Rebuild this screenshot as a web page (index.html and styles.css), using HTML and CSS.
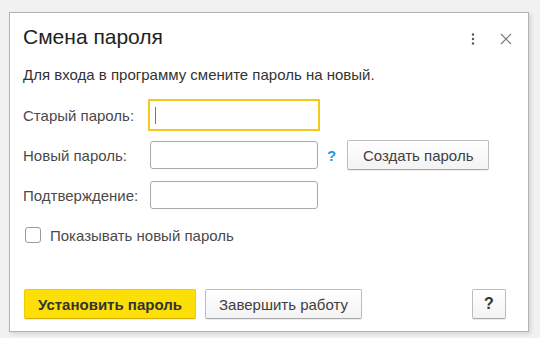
FILE: index.html
```html
<!DOCTYPE html>
<html lang="ru">
<head>
<meta charset="utf-8">
<link rel="stylesheet" href="styles.css">
</head>
<body>
<div class="dialog">
  <div class="header">
    <div class="title">Смена пароля</div>
    <div class="tools">
      <svg class="more" width="4" height="12" viewBox="0 0 4 12"><circle cx="2" cy="1.5" r="1.2" fill="#555"/><circle cx="2" cy="6" r="1.2" fill="#555"/><circle cx="2" cy="10.5" r="1.2" fill="#555"/></svg>
      <svg class="close" width="12" height="12" viewBox="0 0 12 12"><path d="M1 1 L11 11 M11 1 L1 11" stroke="#777" stroke-width="1.1" fill="none"/></svg>
    </div>
  </div>
  <div class="body">
    <p class="intro">Для входа в программу смените пароль на новый.</p>
    <div class="form">
      <div class="row"><span class="lbl">Старый пароль:</span><div class="input focus"><span class="caret"></span></div></div>
      <div class="row"><span class="lbl">Новый пароль:</span><div class="input"></div><span class="hint">?</span><button class="btn create">Создать пароль</button></div>
      <div class="row"><span class="lbl">Подтверждение:</span><div class="input"></div></div>
    </div>
    <div class="check"><span class="box"></span><span class="check-lbl">Показывать новый пароль</span></div>
  </div>
  <div class="footer">
    <button class="btn primary">Установить пароль</button>
    <button class="btn finish">Завершить работу</button>
    <span class="spacer"></span>
    <button class="btn help">?</button>
  </div>
</div>
</body>
</html>
```

FILE: styles.css
```css
html, body {
  margin: 0;
  padding: 0;
}
body {
  background: #f1f1f1;
  width: 540px;
  height: 338px;
  overflow: hidden;
  font-family: "Liberation Sans", Arial, sans-serif;
  color: #404040;
}
.dialog {
  margin: 12px 0 0 9px;
  width: 520px;
  height: 320px;
  box-sizing: border-box;
  border: 1px solid #b3b3b3;
  background: #fff;
  box-shadow: 2px 2px 4px rgba(0,0,0,0.12);
  display: flex;
  flex-direction: column;
}
.header {
  display: flex;
  align-items: center;
  padding: 12px 16px 0 13px;
  height: 24px;
}
.title {
  font-size: 21px;
  line-height: 24px;
  color: #222;
  flex: 1;
}
.tools {
  display: flex;
  align-items: center;
  gap: 25px;
  margin-top: 4px;
}
.body {
  padding: 0 13px;
}
.intro {
  margin: 17px 0 0 0;
  font-size: 15px;
  line-height: 18px;
  color: #333;
}
.form {
  margin-top: 16px;
  display: flex;
  flex-direction: column;
  gap: 10px;
}
.row {
  display: flex;
  align-items: center;
  height: 30px;
}
.lbl {
  flex: 0 0 127px;
  font-size: 15px;
  color: #4a4a4a;
}
.input {
  width: 168px;
  height: 28px;
  box-sizing: border-box;
  border: 1px solid #a9a9a9;
  border-radius: 3px;
  background: #fff;
  display: flex;
  align-items: center;
}
.input.focus {
  border-color: #fff;
  outline: 2.5px solid #f5c917;
  outline-offset: 0.5px;
  border-radius: 0;
}
.caret {
  display: block;
  width: 1px;
  height: 17px;
  margin-left: 4px;
  background: #777;
}
.hint {
  margin-left: 9px;
  font-size: 15px;
  font-weight: bold;
  color: #1f9ad6;
}
.btn {
  font-family: "Liberation Sans", Arial, sans-serif;
  font-size: 15px;
  height: 30px;
  box-sizing: border-box;
  border: 1px solid #bdbdbd;
  border-bottom-color: #a8a8a8;
  border-radius: 2px;
  background: linear-gradient(#ffffff, #f3f3f3);
  color: #404040;
  padding: 0;
  box-shadow: 0 1px 1px rgba(0,0,0,0.08);
}
.create {
  margin-left: 11px;
  width: 142px;
}
.check {
  margin-top: 15px;
  display: flex;
  align-items: center;
  height: 20px;
}
.box {
  width: 16px;
  height: 16px;
  box-sizing: border-box;
  border: 1px solid #9a9a9a;
  border-radius: 3px;
  margin-left: 2px;
}
.check-lbl {
  margin-left: 9px;
  font-size: 15px;
  color: #4a4a4a;
}
.footer {
  margin-top: auto;
  display: flex;
  align-items: center;
  padding: 0 22px 12px 14px;
  gap: 9px;
}
.primary {
  width: 172px;
  background: #fbdf06;
  border-color: #f0cc00;
  border-bottom-color: #d4b000;
  font-weight: bold;
  color: #333;
}
.finish {
  width: 157px;
}
.spacer {
  flex: 1;
}
.help {
  width: 34px;
  font-size: 16px;
  font-weight: bold;
  color: #333;
}
```
